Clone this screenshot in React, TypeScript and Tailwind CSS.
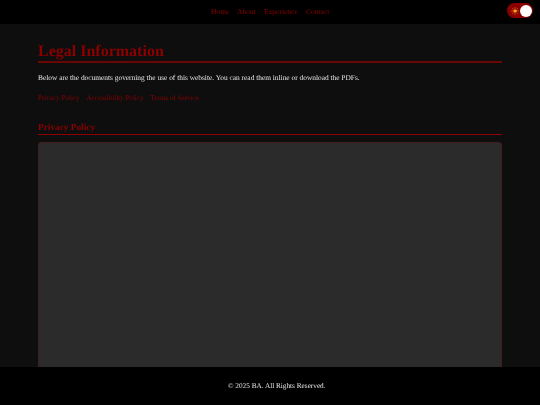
import { Sun } from "lucide-react";

const NAV = ["Home", "About", "Experience", "Contact"];
const DOCS = ["Privacy Policy", "Accessibility Policy", "Terms of Service"];

export default function App() {
  return (
    <div className="flex h-[405px] flex-col overflow-hidden bg-[#0e0e0e] font-['Liberation_Serif',serif] text-[#e6e6e6] [text-rendering:geometricPrecision]">
      {/* Header */}
      <header className="relative flex h-6 shrink-0 items-center justify-center gap-[8px] bg-black text-[7.5px]">
        {NAV.map((item) => (
          <a key={item} className="font-medium text-[#8b0000] will-change-transform">
            {item}
          </a>
        ))}
        <div className="absolute right-[7px] top-[3px] flex h-[15px] w-[26px] items-center rounded-full bg-[#8b0000]">
          <Sun className="ml-[4px] h-[8px] w-[8px] fill-[#ff9d1e] text-[#ff9d1e]" />
          <span className="ml-[1px] h-[12px] w-[12px] rounded-full bg-white" />
        </div>
      </header>

      {/* Content */}
      <main className="min-h-0 flex-1 overflow-hidden px-[38px] pt-[19px]">
        <h1 className="border-b-2 border-[#6b0606] text-[16px] leading-[18px] font-bold text-[#8b0000] will-change-transform">
          Legal Information
        </h1>
        <p className="mt-[9px] text-[7.4px] leading-[12px] will-change-transform">
          Below are the documents governing the use of this website. You can read them inline or download the PDFs.
        </p>
        <div className="mt-[8px] flex gap-[7px] text-[7.1px] leading-[12px] text-[#8b0000] will-change-transform">
          {DOCS.map((doc) => (
            <a key={doc}>{doc}</a>
          ))}
        </div>
        <h2 className="mt-[19px] border-b border-[#8b0000] text-[9.3px] leading-[11px] font-bold text-[#8b0000] will-change-transform">
          Privacy Policy
        </h2>
        <div className="mt-[7px] h-[300px] rounded-[3px] border border-[#451c1c] bg-[#2b2b2b]" />
      </main>

      {/* Footer */}
      <footer className="flex h-[38px] shrink-0 items-center justify-center bg-black pl-[13px] text-[7.25px]">
        <span className="will-change-transform">© 2025 BA. All Rights Reserved.</span>
      </footer>
    </div>
  );
}
